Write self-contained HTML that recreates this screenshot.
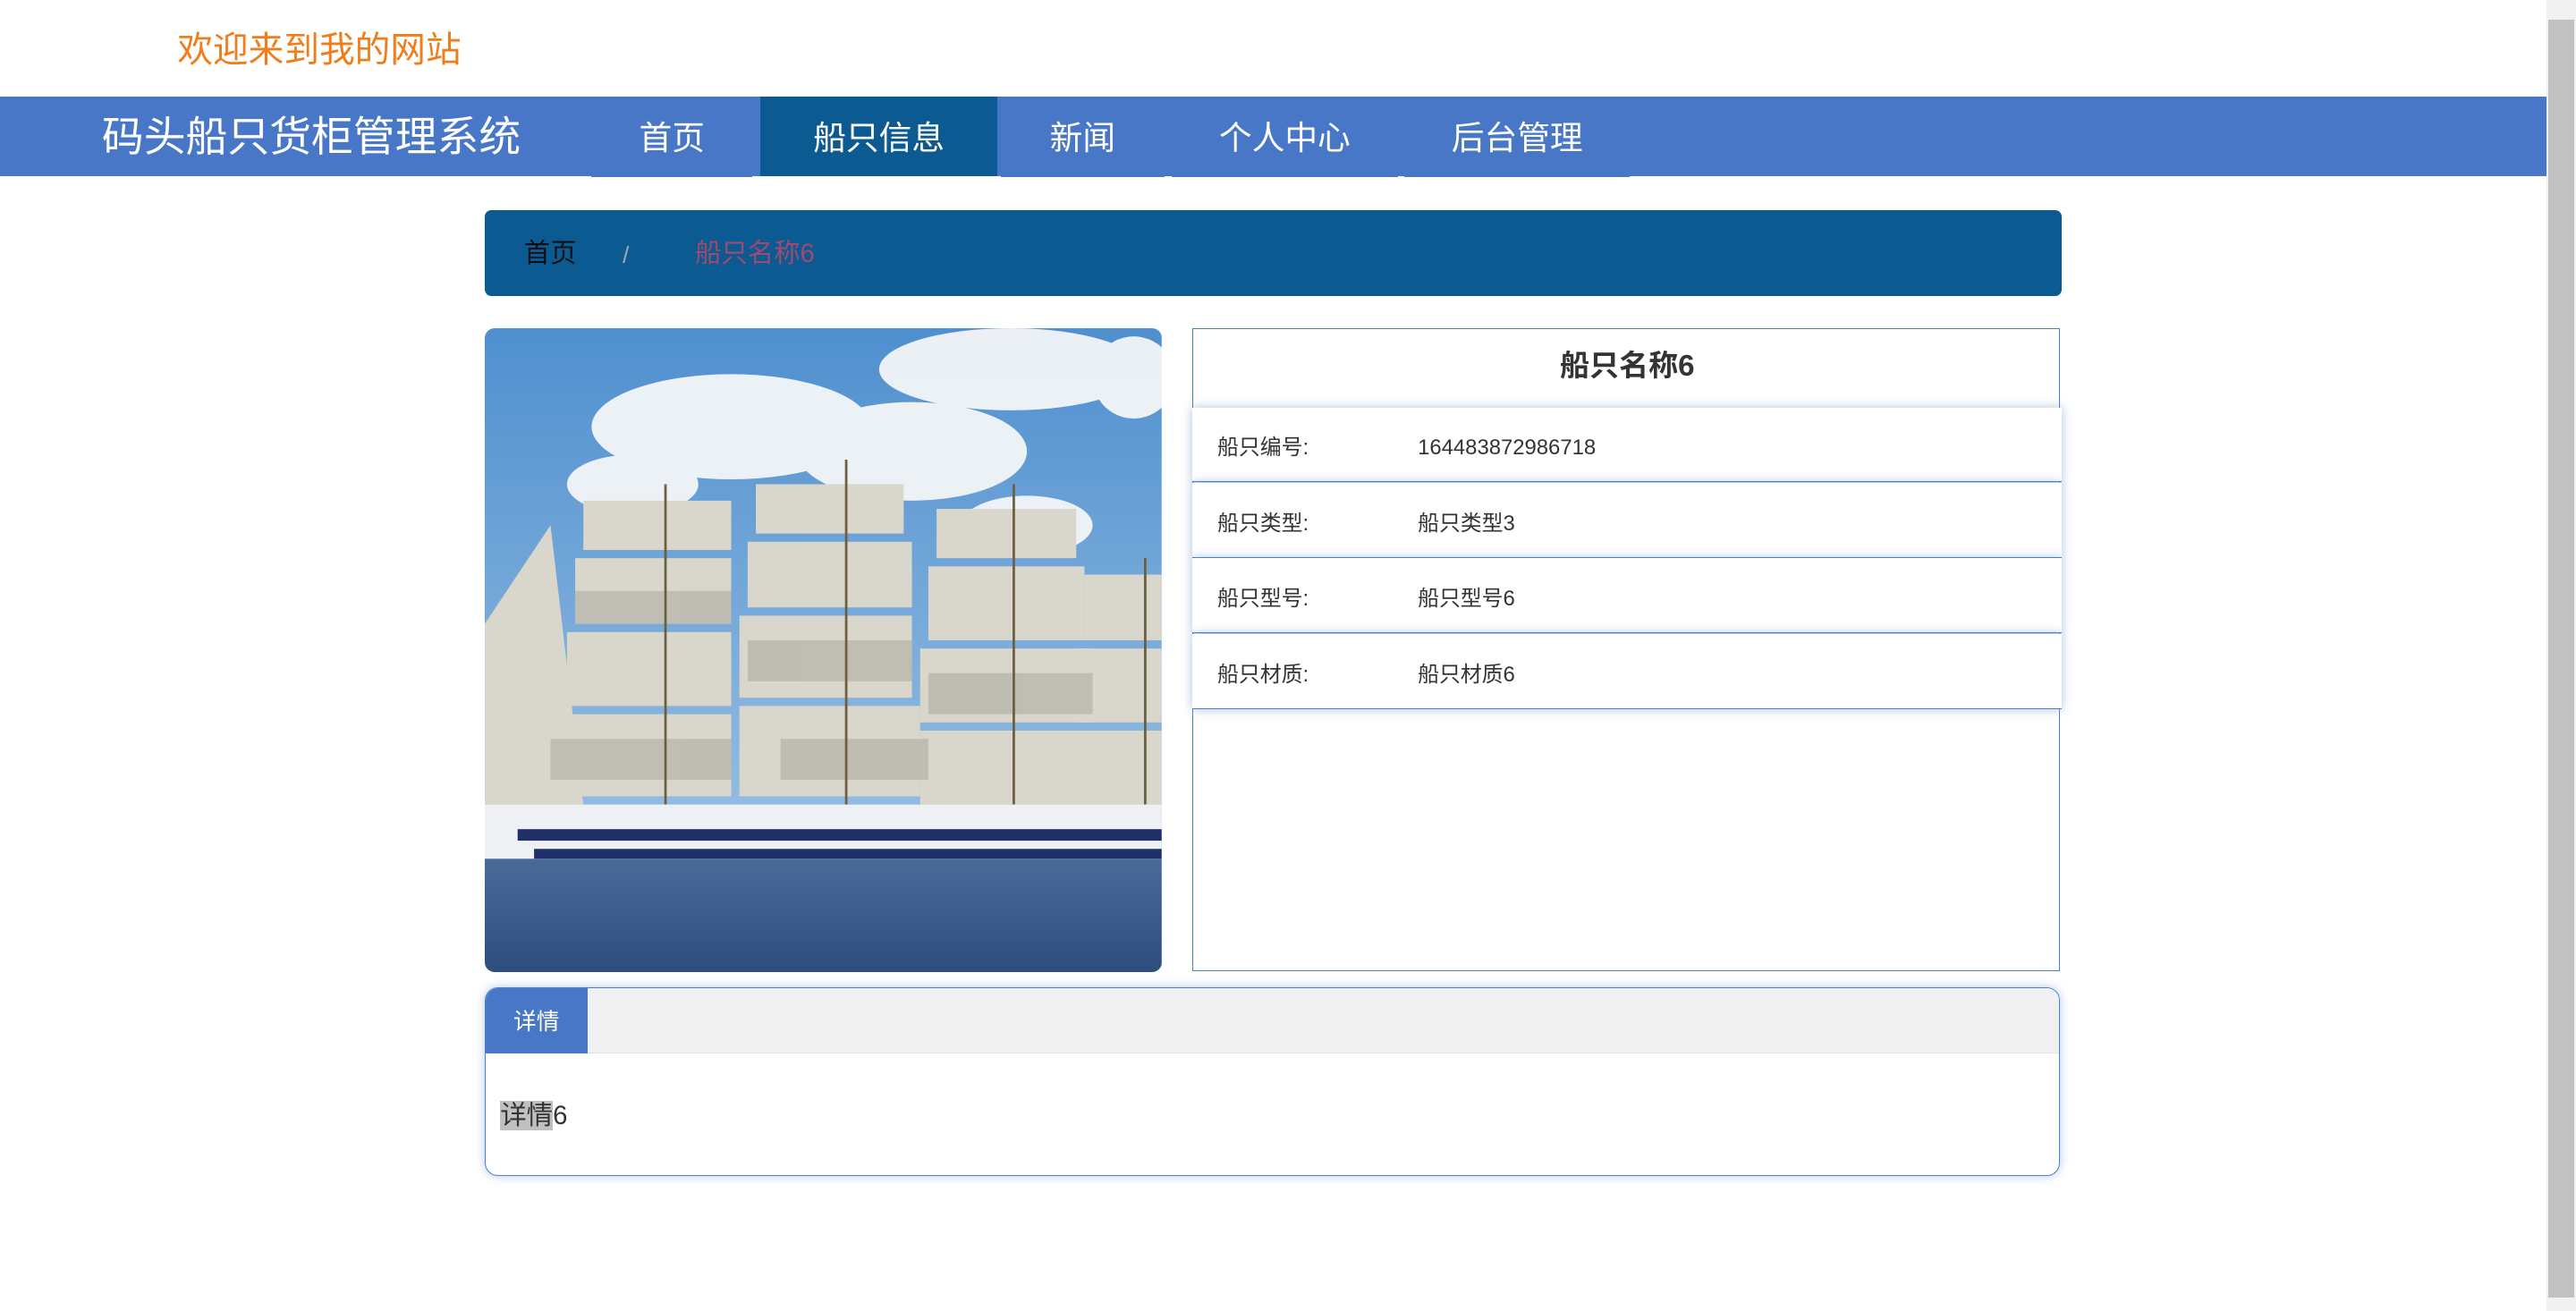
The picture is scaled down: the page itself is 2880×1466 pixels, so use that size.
<!DOCTYPE html>
<html><head><meta charset="utf-8">
<style>
html,body{margin:0;padding:0;width:2880px;height:1466px;overflow:hidden;background:#fff;}
#z{zoom:1.83674;width:1568px;height:798px;position:relative;font-family:"Liberation Sans","Noto Sans CJK SC",sans-serif;}
.a{position:absolute;white-space:nowrap;}
.nav{position:absolute;top:59px;left:0;width:1550px;height:48px;background:#4877c7;}
.ni{position:absolute;top:59px;height:49px;background:#4877c7;color:#fff;font-size:20px;line-height:51px;text-align:center;}
.row{position:absolute;left:726px;width:529px;height:45px;border-bottom:1px solid #4a7fd0;box-shadow:0 0 6px rgba(74,120,200,.45);background:#fff;font-size:13px;color:#333;}
.row span{position:absolute;top:2px;line-height:46px;}
</style></head><body><div id="z">
<div class="a" style="left:108px;top:16px;font-size:21.6px;color:#ef7d1a;line-height:30px;">欢迎来到我的网站</div>
<div class="nav"></div>
<div class="a" style="left:62px;top:65px;font-size:25.5px;color:#fff;line-height:38px;">码头船只货柜管理系统</div>
<div class="ni" style="left:360px;width:98px;">首页</div>
<div class="ni" style="left:463px;width:144px;background:#0b5a92;height:48px;">船只信息</div>
<div class="ni" style="left:609px;width:100px;">新闻</div>
<div class="ni" style="left:713px;width:138px;">个人中心</div>
<div class="ni" style="left:855px;width:137px;">后台管理</div>

<div class="a" style="left:295px;top:128px;width:960px;height:52px;background:#0b5a92;border-radius:4px;"></div>
<div class="a" style="left:319px;top:144px;font-size:16px;color:#111;line-height:22px;">首页</div>
<div class="a" style="left:379px;top:145px;font-size:14px;color:#aaa;line-height:22px;">/</div>
<div class="a" style="left:423px;top:144px;font-size:16px;color:#a04a70;line-height:22px;">船只名称6</div>

<svg class="a" style="left:295px;top:200px;border-radius:6px;" width="412" height="392" viewBox="0 0 412 392">
<defs><linearGradient id="sky" x1="0" y1="0" x2="0" y2="1"><stop offset="0" stop-color="#4f8fcf"/><stop offset="1" stop-color="#a9cbe6"/></linearGradient>
<linearGradient id="sea" x1="0" y1="0" x2="0" y2="1"><stop offset="0" stop-color="#4a6a9a"/><stop offset="1" stop-color="#2e4d7e"/></linearGradient></defs>
<rect width="412" height="392" fill="url(#sky)"/>
<g fill="#f4f6f8" opacity=".95">
<ellipse cx="150" cy="60" rx="85" ry="32"/><ellipse cx="260" cy="75" rx="70" ry="30"/><ellipse cx="320" cy="25" rx="80" ry="25"/><ellipse cx="330" cy="120" rx="40" ry="18"/><ellipse cx="90" cy="95" rx="40" ry="18"/><ellipse cx="395" cy="30" rx="25" ry="25"/>
</g>
<g fill="#d9d6cc">
<rect x="60" y="105" width="90" height="30"/><rect x="55" y="140" width="95" height="40"/><rect x="50" y="185" width="100" height="45"/><rect x="50" y="235" width="100" height="50"/>
<rect x="165" y="95" width="90" height="30"/><rect x="160" y="130" width="100" height="40"/><rect x="155" y="175" width="105" height="50"/><rect x="155" y="230" width="110" height="55"/>
<rect x="275" y="110" width="85" height="30"/><rect x="270" y="145" width="95" height="45"/><rect x="265" y="195" width="105" height="45"/><rect x="265" y="245" width="105" height="45"/>
<rect x="365" y="150" width="47" height="40"/><rect x="360" y="195" width="52" height="45"/><rect x="360" y="245" width="52" height="45"/>
<polygon points="0,180 40,120 60,290 0,290"/>
</g>
<g fill="#b9b6ae" opacity=".8">
<rect x="55" y="160" width="95" height="20"/><rect x="160" y="190" width="100" height="25"/><rect x="270" y="210" width="100" height="25"/><rect x="40" y="250" width="110" height="25"/><rect x="180" y="250" width="90" height="25"/>
</g>
<g stroke="#6a6040" stroke-width="1.5"><line x1="110" y1="95" x2="110" y2="290"/><line x1="220" y1="80" x2="220" y2="290"/><line x1="322" y1="95" x2="322" y2="290"/><line x1="402" y1="140" x2="402" y2="290"/></g>
<rect x="0" y="290" width="412" height="40" fill="#eef0f4"/>
<rect x="20" y="305" width="392" height="7" fill="#1f2f6a"/>
<rect x="30" y="317" width="382" height="6" fill="#1f2f6a"/>
<rect x="0" y="323" width="412" height="69" fill="url(#sea)"/>
</svg>

<div class="a" style="left:726px;top:200px;width:527px;height:390px;border:1px solid #4a7fd0;"></div>
<div class="a" style="left:727px;top:210px;width:527px;text-align:center;font-size:18px;font-weight:bold;color:#333;line-height:26px;">船只名称6</div>
<div class="row" style="top:248px;"><span style="left:15px;">船只编号:</span><span style="left:137px;">164483872986718</span></div>
<div class="row" style="top:294px;"><span style="left:15px;">船只类型:</span><span style="left:137px;">船只类型3</span></div>
<div class="row" style="top:340px;"><span style="left:15px;">船只型号:</span><span style="left:137px;">船只型号6</span></div>
<div class="row" style="top:386px;"><span style="left:15px;">船只材质:</span><span style="left:137px;">船只材质6</span></div>

<div class="a" style="left:295px;top:601px;width:958px;height:114px;border:1px solid #4a7fd0;border-radius:8px;box-shadow:0 0 6px rgba(74,120,200,.4);overflow:hidden;background:#fff;">
<div style="position:absolute;left:0;top:0;width:958px;height:39px;background:#f1f1f1;border-bottom:1px solid #e2e2e2;"></div>
<div style="position:absolute;left:0;top:0;width:62px;height:40px;background:#4877c7;color:#fff;font-size:14px;line-height:42px;text-align:center;">详情</div>
<div style="position:absolute;left:9px;top:67px;font-size:16px;color:#333;line-height:22px;"><span style="background:#c0c0c0;">详情</span>6</div>
</div>

<div class="a" style="left:1550px;top:0;width:18px;height:798px;background:#f1f1f1;"></div>
<div class="a" style="left:1551px;top:12px;width:16px;height:778px;background:#c1c1c1;"></div>
</div></body></html>
